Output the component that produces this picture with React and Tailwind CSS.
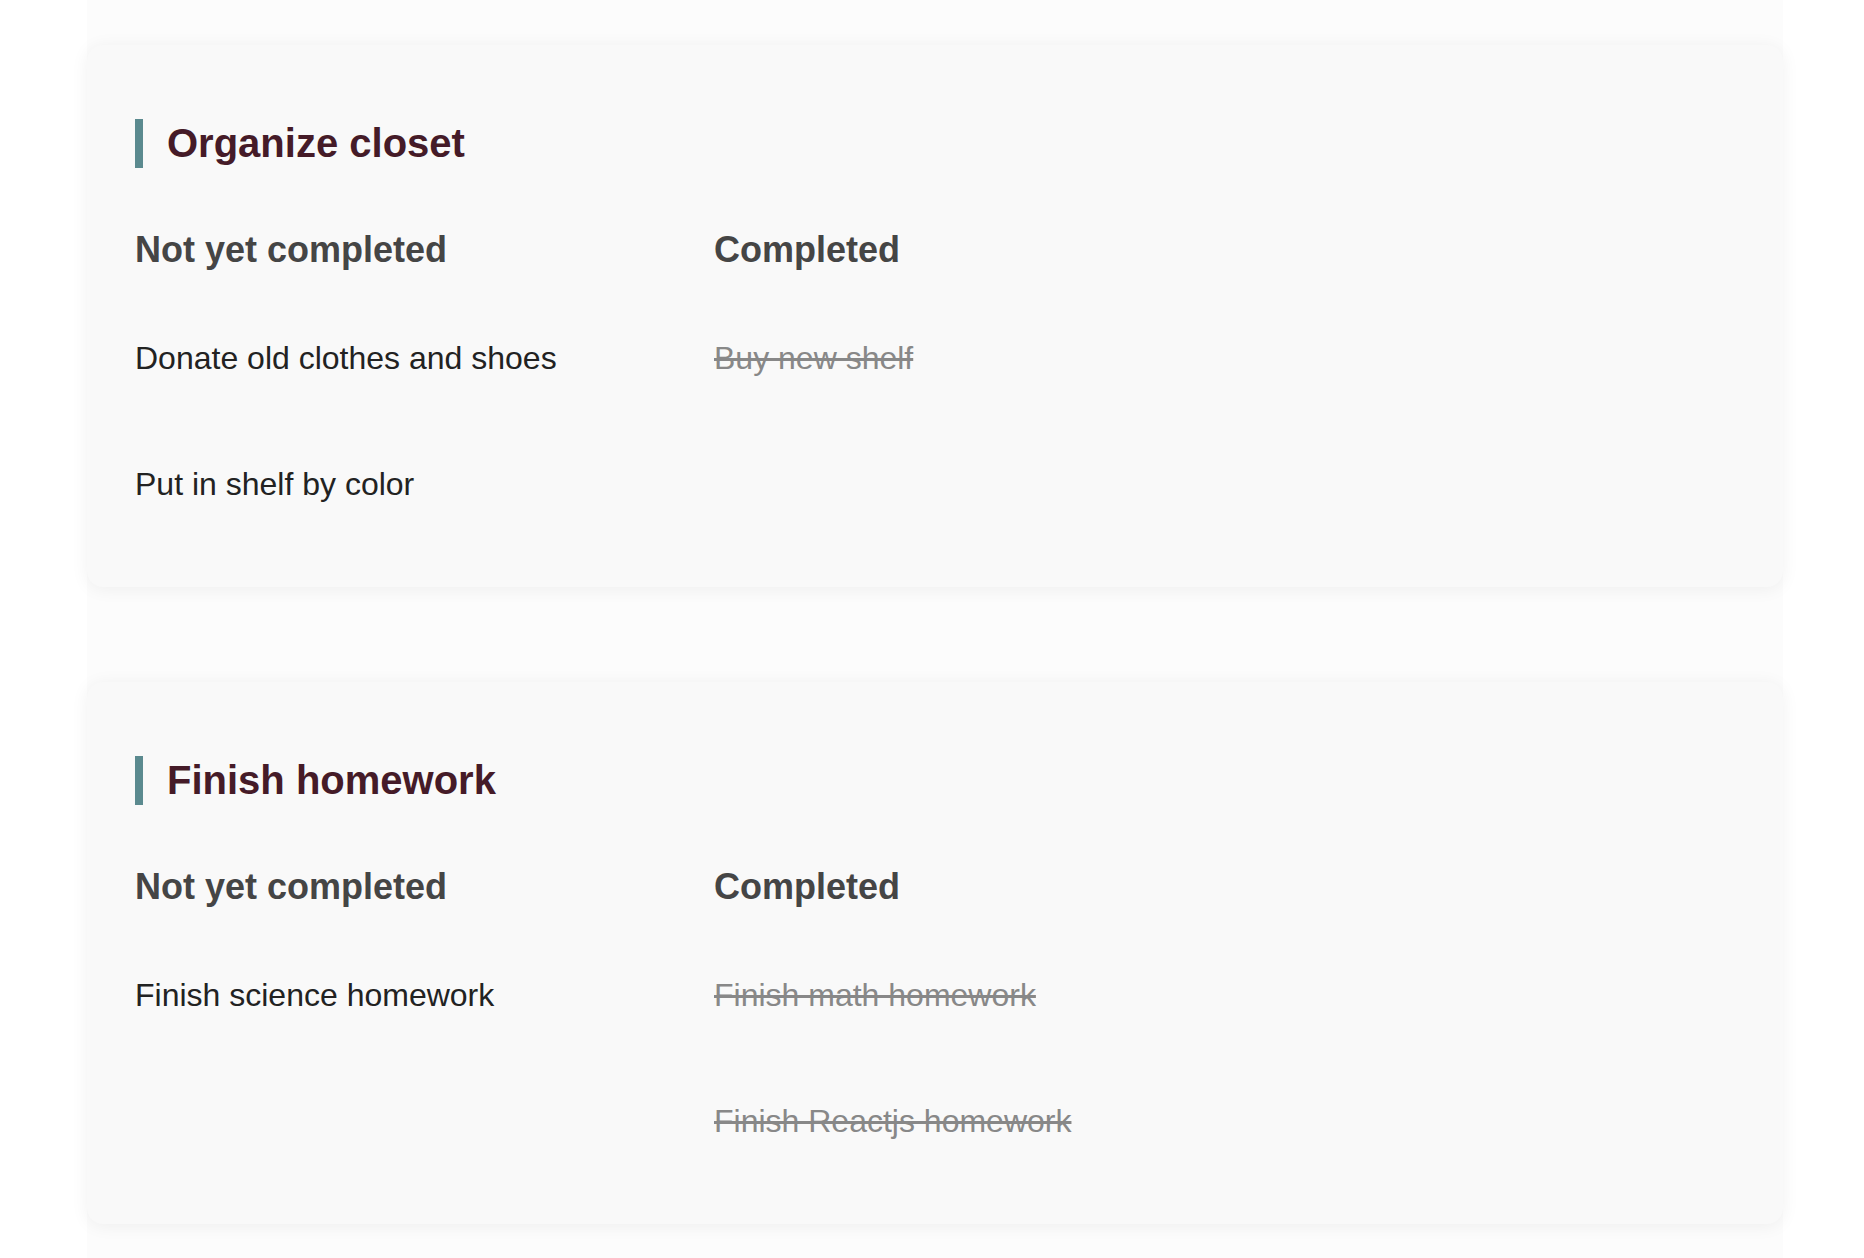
import React from "react";

const todos = [
    {
        title: "Organize closet",
        pending: ["Donate old clothes and shoes", "Put in shelf by color"],
        done: ["Buy new shelf"],
    },
    {
        title: "Finish homework",
        pending: ["Finish science homework"],
        done: ["Finish math homework", "Finish Reactjs homework"],
    },
];

function TodoCard({ todo }) {
    return (
        <section className="bg-[#f9f9f9] rounded-2xl shadow-[0_2px_18px_rgba(0,0,0,0.06)] pt-[74px] pb-[84px] px-[48px]">
            {/* Title with accent bar */}
            <h2 className="border-l-[8px] border-[#5b8a8f] pl-[24px] text-[40px] leading-[49px] font-bold text-[#451b28]">
                {todo.title}
            </h2>

            <div className="flex mt-[60px]">
                <div className="w-[579px]">
                    <h3 className="text-[36px] leading-[43px] font-bold text-[#454545]">Not yet completed</h3>
                    <ul className="mt-[68px] flex flex-col gap-[88px]">
                        {todo.pending.map((item) => (
                            <li key={item} className="text-[32px] leading-[38px] text-[#222]">
                                {item}
                            </li>
                        ))}
                    </ul>
                </div>
                <div className="flex-1">
                    <h3 className="text-[36px] leading-[43px] font-bold text-[#454545]">Completed</h3>
                    <ul className="mt-[68px] flex flex-col gap-[88px]">
                        {todo.done.map((item) => (
                            <li key={item} className="text-[32px] leading-[38px] text-[#888] line-through">
                                {item}
                            </li>
                        ))}
                    </ul>
                </div>
            </div>
        </section>
    );
}

export default function App() {
    return (
        <div className="min-h-screen bg-white font-['Liberation_Sans',Arial,sans-serif]">
            <main className="w-[1696px] ml-[87px] min-h-screen bg-[#fcfcfc] pt-[45px] pb-[40px] flex flex-col gap-[95px]">
                {todos.map((todo) => (
                    <TodoCard key={todo.title} todo={todo} />
                ))}
            </main>
        </div>
    );
}
